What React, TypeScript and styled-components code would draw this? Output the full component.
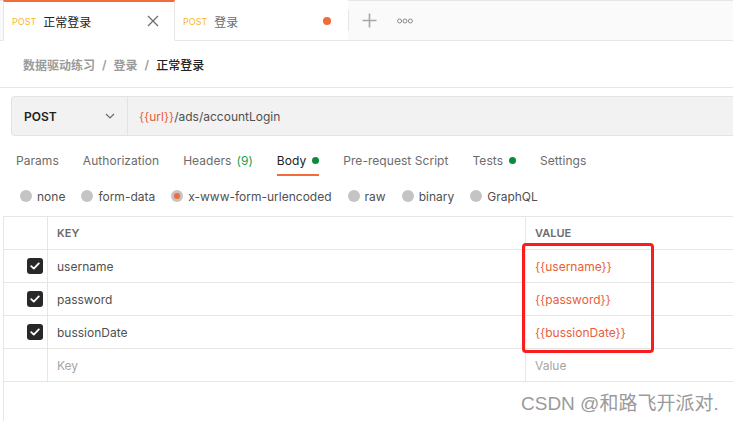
import React from 'react';
import styled, { createGlobalStyle } from 'styled-components';

const GlobalStyle = createGlobalStyle`
  html, body {
    margin: 0;
    padding: 0;
    background: #ffffff;
    overflow: hidden;
  }
  body {
    font-family: Inter, "Noto Sans CJK SC", "Noto Sans", sans-serif;
    color: #505050;
  }
  * {
    box-sizing: border-box;
  }
`;

const rows = [
  { key: 'username', value: '{{username}}' },
  { key: 'password', value: '{{password}}' },
  { key: 'bussionDate', value: '{{bussionDate}}' },
];

const requestTabs = [
  { label: 'Params' },
  { label: 'Authorization' },
  { label: 'Headers', count: '(9)' },
  { label: 'Body', dot: true, active: true },
  { label: 'Pre-request Script' },
  { label: 'Tests', dot: true },
  { label: 'Settings' },
];

const bodyModes = ['none', 'form-data', 'x-www-form-urlencoded', 'raw', 'binary', 'GraphQL'];

function CheckIcon() {
  return (
    <svg width="10" height="8" viewBox="0 0 10 8" fill="none">
      <path d="M1.2 4.2L3.8 6.6L8.8 1.4" stroke="#fff" strokeWidth="1.8" strokeLinecap="round" strokeLinejoin="round" />
    </svg>
  );
}

export default function App() {
  return (
    <Page>
      <GlobalStyle />
      <TabBar>
        <Tab active>
          <Method>POST</Method>
          <TabTitle>正常登录</TabTitle>
          <CloseIcon viewBox="0 0 12 12">
            <path d="M1 1L11 11M11 1L1 11" stroke="#6b6b6b" strokeWidth="1.2" />
          </CloseIcon>
        </Tab>
        <Tab>
          <Method>POST</Method>
          <TabTitle muted>登录</TabTitle>
          <UnsavedDot />
        </Tab>
        <Divider />
        <IconButton>
          <svg width="15" height="15" viewBox="0 0 15 15">
            <path d="M7.5 0.5V14.5M0.5 7.5H14.5" stroke="#a6a6a6" strokeWidth="1.6" />
          </svg>
        </IconButton>
        <IconButton>
          <svg width="16" height="6" viewBox="0 0 16 6" fill="none">
            <circle cx="2.6" cy="3" r="2" stroke="#8a8a8a" strokeWidth="1" />
            <circle cx="8" cy="3" r="2" stroke="#8a8a8a" strokeWidth="1" />
            <circle cx="13.4" cy="3" r="2" stroke="#8a8a8a" strokeWidth="1" />
          </svg>
        </IconButton>
      </TabBar>

      <Breadcrumb>
        <Crumb>数据驱动练习</Crumb>
        <Slash>/</Slash>
        <Crumb>登录</Crumb>
        <Slash>/</Slash>
        <Crumb current>正常登录</Crumb>
      </Breadcrumb>

      <UrlBar>
        <MethodSelect>
          <span>POST</span>
          <svg width="10" height="6" viewBox="0 0 10 6" fill="none">
            <path d="M1 1L5 5L9 1" stroke="#6b6b6b" strokeWidth="1.2" />
          </svg>
        </MethodSelect>
        <UrlText>
          <Variable>{'{{url}}'}</Variable>/ads/accountLogin
        </UrlText>
      </UrlBar>

      <RequestTabs>
        {requestTabs.map((t) => (
          <RequestTab key={t.label} active={t.active}>
            {t.label}
            {t.count && <Count>{t.count}</Count>}
            {t.dot && <GreenDot />}
          </RequestTab>
        ))}
      </RequestTabs>

      <ModeRow>
        {bodyModes.map((m) => (
          <Mode key={m}>
            <Radio selected={m === 'x-www-form-urlencoded'} />
            {m}
          </Mode>
        ))}
      </ModeRow>

      <TableWrap>
        <Table>
          <Row>
            <CheckCell />
            <KeyCell>
              <HeadText>KEY</HeadText>
            </KeyCell>
            <ValueCell>
              <HeadText>VALUE</HeadText>
            </ValueCell>
          </Row>
          {rows.map((r) => (
            <Row key={r.key}>
              <CheckCell>
                <Checkbox>
                  <CheckIcon />
                </Checkbox>
              </CheckCell>
              <KeyCell>{r.key}</KeyCell>
              <ValueCell>
                <Variable>{r.value}</Variable>
              </ValueCell>
            </Row>
          ))}
          <Row>
            <CheckCell />
            <KeyCell muted>Key</KeyCell>
            <ValueCell muted>Value</ValueCell>
          </Row>
        </Table>
        <Highlight />
        <Watermark>CSDN @和路飞开派对.</Watermark>
      </TableWrap>
    </Page>
  );
}

const Page = styled.div`
  display: flex;
  flex-direction: column;
  width: 733px;
  height: 421px;
  overflow: hidden;
`;

const TabBar = styled.div`
  display: flex;
  align-items: stretch;
  flex-shrink: 0;
  height: 41px;
  padding-left: 3px;
  border-top: 1px solid #e6e6e6;
  border-bottom: 1px solid #e6e6e6;
  background: #fafafa;
`;

const Tab = styled.div<{ active?: boolean }>`
  display: flex;
  align-items: center;
  width: ${(p) => (p.active ? '172px' : '173px')};
  padding: 0 8px;
  margin-top: -1px;
  margin-bottom: -1px;
  background: #ffffff;
  border-left: ${(p) => (p.active ? '1px solid #e6e6e6' : 'none')};
  border-right: ${(p) => (p.active ? '1px solid #e6e6e6' : 'none')};
  border-top: 2px solid ${(p) => (p.active ? '#f26b3a' : 'transparent')};
  border-bottom: 1px solid ${(p) => (p.active ? '#ffffff' : '#e6e6e6')};
`;

const Method = styled.span`
  font-size: 9px;
  color: #f7b82c;
  margin-right: 7px;
`;

const TabTitle = styled.span<{ muted?: boolean }>`
  flex: 1;
  font-size: 12px;
  color: ${(p) => (p.muted ? '#6b6b6b' : '#212121')};
`;

const CloseIcon = styled.svg`
  width: 12px;
  height: 12px;
  margin-right: 7px;
`;

const UnsavedDot = styled.span`
  width: 8px;
  height: 8px;
  border-radius: 50%;
  background: #f26b3a;
  margin-right: 9px;
`;

const Divider = styled.div`
  width: 1px;
  height: 21px;
  align-self: center;
  background: #e6e6e6;
  margin-right: 12px;
`;

const IconButton = styled.div`
  display: flex;
  align-items: center;
  justify-content: center;
  width: 16px;
  margin-right: 20px;
`;

const Breadcrumb = styled.div`
  display: flex;
  align-items: center;
  flex-shrink: 0;
  height: 47px;
  padding-left: 23px;
  border-bottom: 1px solid #e6e6e6;
  font-size: 12px;
`;

const Crumb = styled.span<{ current?: boolean }>`
  color: ${(p) => (p.current ? '#212121' : '#9b9b9b')};
  font-weight: ${(p) => (p.current ? 500 : 600)};
`;

const Slash = styled.span`
  color: #9b9b9b;
  margin: 0 7px;
  font-weight: 600;
`;

const UrlBar = styled.div`
  display: flex;
  align-items: stretch;
  flex-shrink: 0;
  height: 40px;
  margin: 8px 0 0 11px;
  background: #f2f2f2;
  border: 1px solid #e3e3e3;
  border-right: none;
  border-radius: 4px 0 0 4px;
`;

const MethodSelect = styled.div`
  display: flex;
  align-items: center;
  justify-content: space-between;
  width: 116px;
  padding: 0 12px 0 12px;
  border-right: 1px solid #e3e3e3;
  font-size: 12px;
  font-weight: 600;
  color: #212121;
`;

const UrlText = styled.div`
  display: flex;
  align-items: center;
  padding-left: 11px;
  font-size: 12px;
  color: #505050;
`;

const Variable = styled.span`
  color: #e8603a;
`;

const RequestTabs = styled.div`
  display: flex;
  flex-shrink: 0;
  height: 32px;
  margin-top: 8px;
  padding-left: 16px;
`;

const RequestTab = styled.div<{ active?: boolean }>`
  display: flex;
  align-items: center;
  margin-right: 24px;
  padding-top: 2px;
  font-size: 12px;
  letter-spacing: 0.05px;
  color: ${(p) => (p.active ? '#212121' : '#6b6b6b')};
  border-bottom: 2px solid ${(p) => (p.active ? '#f26b3a' : 'transparent')};
`;

const Count = styled.span`
  color: #1e9e50;
  margin-left: 5px;
`;

const GreenDot = styled.span`
  width: 7px;
  height: 7px;
  border-radius: 50%;
  background: #0c8a3c;
  margin-left: 6px;
`;

const ModeRow = styled.div`
  display: flex;
  align-items: center;
  flex-shrink: 0;
  height: 40px;
  padding-left: 20px;
`;

const Mode = styled.div`
  display: flex;
  align-items: center;
  gap: 5px;
  margin-right: 16px;
  font-size: 12px;
  color: #505050;
`;

const Radio = styled.span<{ selected?: boolean }>`
  position: relative;
  width: 12px;
  height: 12px;
  border-radius: 50%;
  background: #c4c4c4;

  &::after {
    content: '';
    display: ${(p) => (p.selected ? 'block' : 'none')};
    position: absolute;
    left: 3px;
    top: 3px;
    width: 6px;
    height: 6px;
    border-radius: 50%;
    background: #f26b3a;
  }
`;

const TableWrap = styled.div`
  position: relative;
  flex: 1;
  padding-left: 3px;
`;

const Table = styled.div`
  height: 100%;
  border-top: 1px solid #e6e6e6;
  border-left: 1px solid #e6e6e6;
`;

const Row = styled.div`
  display: grid;
  grid-template-columns: 44px 478px 1fr;
  height: 33px;
  border-bottom: 1px solid #e6e6e6;
`;

const CheckCell = styled.div`
  display: flex;
  align-items: center;
  justify-content: center;
  padding-left: 18px;
  border-right: 1px solid #e6e6e6;
`;

const KeyCell = styled.div<{ muted?: boolean }>`
  display: flex;
  align-items: center;
  padding-left: 9px;
  font-size: 12px;
  color: ${(p) => (p.muted ? '#a6a6a6' : '#505050')};
  border-right: 1px solid #e6e6e6;
`;

const ValueCell = styled.div<{ muted?: boolean }>`
  display: flex;
  align-items: center;
  padding-left: 9px;
  font-size: 12px;
  color: ${(p) => (p.muted ? '#a6a6a6' : '#505050')};
`;

const HeadText = styled.span`
  font-size: 11px;
  font-weight: 600;
  color: #6b6b6b;
`;

const Checkbox = styled.span`
  display: flex;
  align-items: center;
  justify-content: center;
  width: 16px;
  height: 16px;
  border-radius: 3px;
  background: #282828;
`;

const Highlight = styled.div`
  position: absolute;
  left: 522px;
  top: 27px;
  width: 132px;
  height: 110px;
  border: 3px solid #fb1d1d;
  border-radius: 4px;
  pointer-events: none;
`;

const Watermark = styled.div`
  position: absolute;
  left: 521px;
  top: 172px;
  font-family: "Liberation Sans", "Noto Sans CJK SC", sans-serif;
  font-size: 19px;
  color: #9a9a9a;
  text-shadow: 0 0 2px #ffffff;
  white-space: nowrap;
`;
